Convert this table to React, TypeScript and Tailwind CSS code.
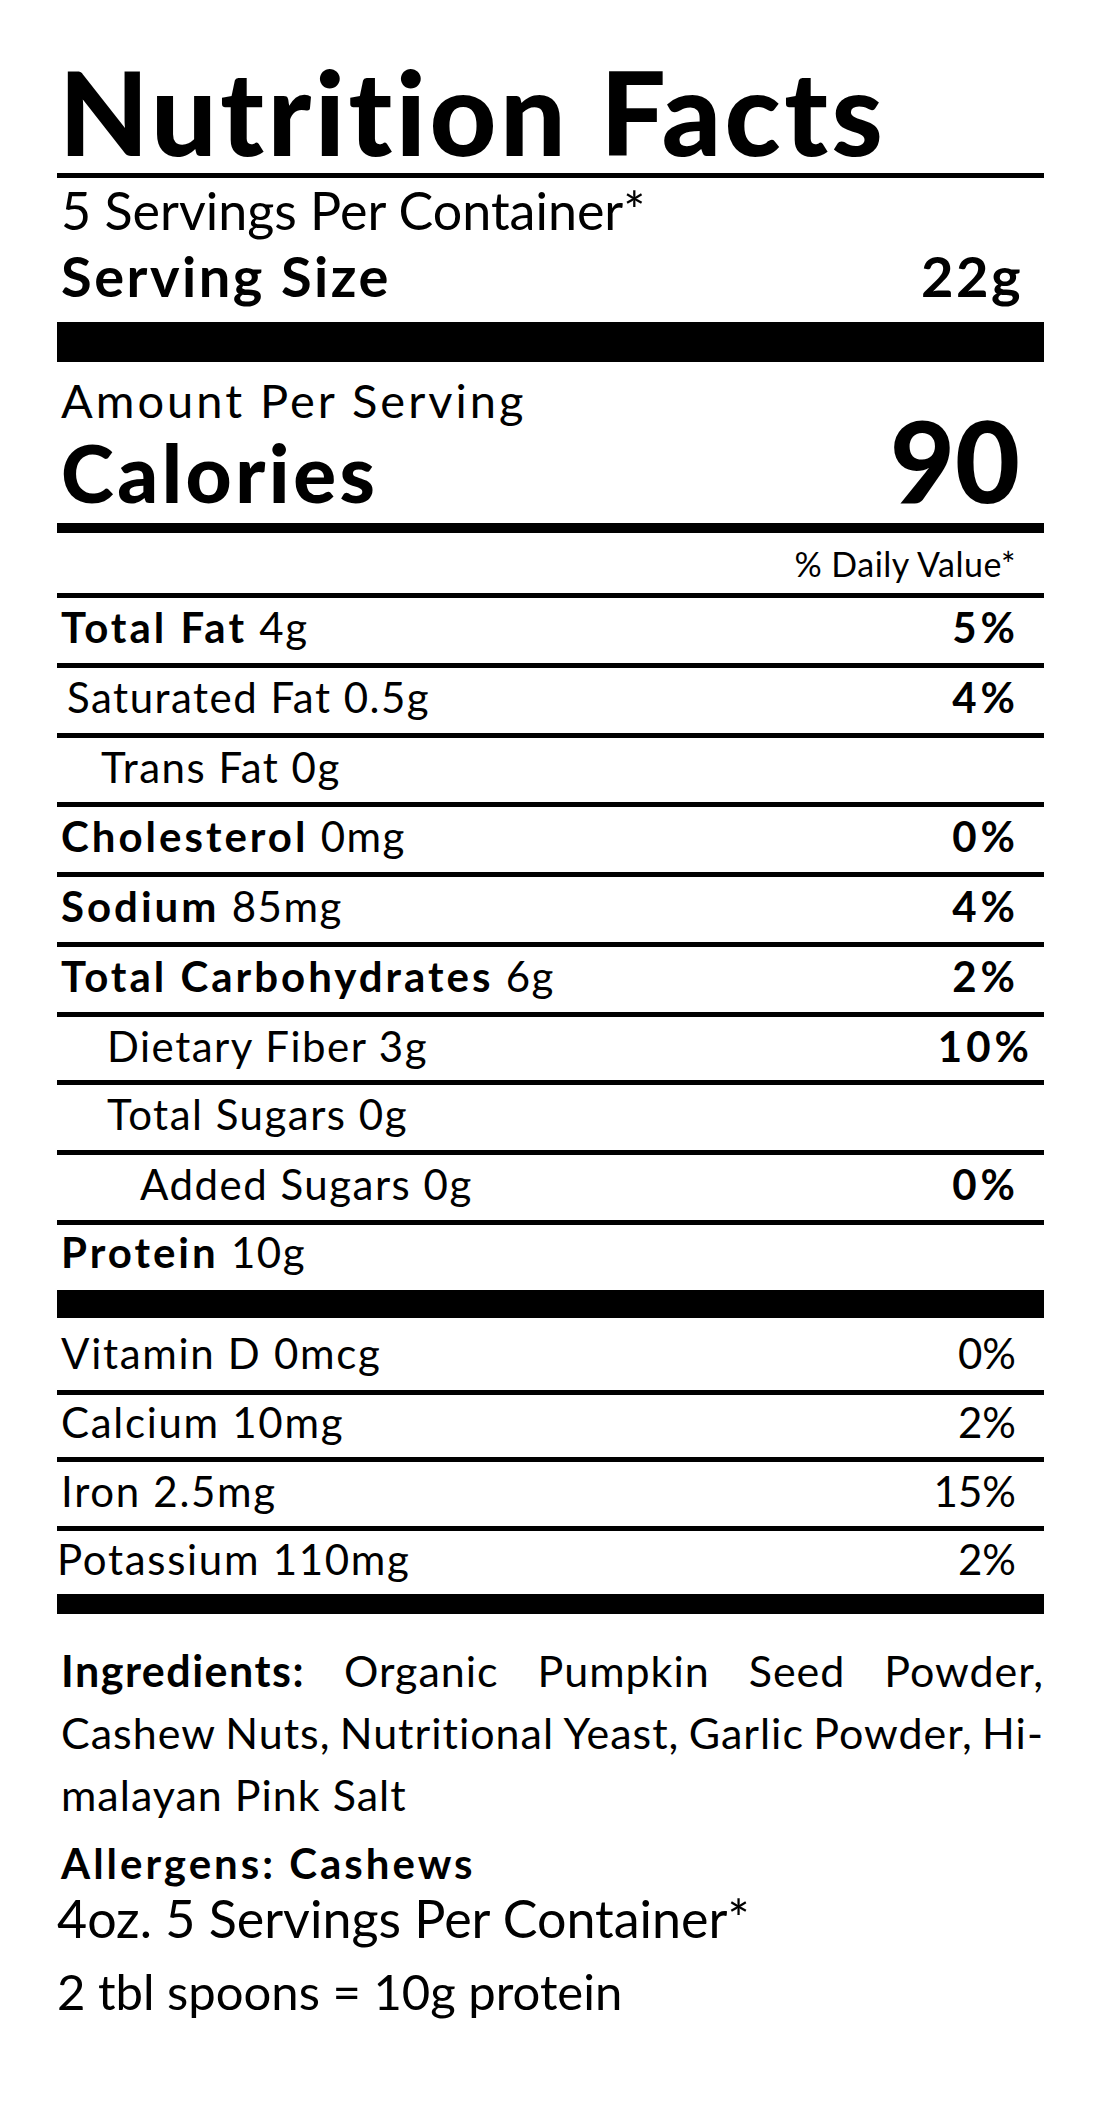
import React from 'react';

type Nutrient = {
  name: string;
  amount: string;
  dv?: string;
  bold?: boolean;
  indent: string;
  height: string;
  dvPad?: string;
};

const nutrients: Nutrient[] = [
  { name: 'Total Fat', amount: '4g', dv: '5%', bold: true, indent: 'pl-[4px]', height: 'h-[65px]' },
  { name: 'Saturated Fat', amount: '0.5g', dv: '4%', indent: 'pl-[10px]', height: 'h-[65px]' },
  { name: 'Trans Fat', amount: '0g', indent: 'pl-[44px]', height: 'h-[64px]' },
  { name: 'Cholesterol', amount: '0mg', dv: '0%', bold: true, indent: 'pl-[4px]', height: 'h-[65px]' },
  { name: 'Sodium', amount: '85mg', dv: '4%', bold: true, indent: 'pl-[4px]', height: 'h-[65px]' },
  { name: 'Total Carbohydrates', amount: '6g', dv: '2%', bold: true, indent: 'pl-[4px]', height: 'h-[65px]' },
  { name: 'Dietary Fiber', amount: '3g', dv: '10%', indent: 'pl-[50px]', height: 'h-[63px]', dvPad: 'pr-[11px]' },
  { name: 'Total Sugars', amount: '0g', indent: 'pl-[50px]', height: 'h-[65px]' },
  { name: 'Added Sugars', amount: '0g', dv: '0%', indent: 'pl-[83px]', height: 'h-[65px]' },
];

const vitamins = [
  { label: 'Vitamin D 0mcg', dv: '0%', height: 'h-[72px]', pad: 'pt-[14px] pl-[4px]' },
  { label: 'Calcium 10mg', dv: '2%', height: 'h-[62px]', pad: 'pt-[6px] pl-[4px]' },
  { label: 'Iron 2.5mg', dv: '15%', height: 'h-[64px]', pad: 'pt-[8px] pl-[4px]' },
  { label: 'Potassium 110mg', dv: '2%', height: 'h-[63px]', pad: 'pt-[7px] pl-[0px]' },
];

const ingredientLines = [
  ['Organic', 'Pumpkin', 'Seed', 'Powder,'],
  ['Cashew', 'Nuts,', 'Nutritional', 'Yeast,', 'Garlic', 'Powder,', 'Hi-'],
];

const Rule = ({ h }: { h: string }) => <div className={`${h} bg-black`} />;

export default function App() {
  return (
    <div className="min-h-[2127px] bg-white text-black font-['Lato',sans-serif] [font-variant-ligatures:none]">
      <div className="ml-[57px] w-[987px]">
        {/* header */}
        <div className="h-[173px] pt-[54px] pl-[2px]">
          <h1 className="text-[116px] leading-none font-black tracking-[3.5px]">Nutrition Facts</h1>
        </div>
        <Rule h="h-[5px]" />
        <div className="h-[144px] pt-[6px] pl-[4px]">
          <div className="text-[52px] leading-none">5 Servings Per Container*</div>
          <div className="mt-[12px] flex justify-between pr-[21px] text-[56px] leading-none font-bold tracking-[2.5px]">
            <span>Serving Size</span>
            <span>22g</span>
          </div>
        </div>
        <Rule h="h-[40px]" />

        {/* calories */}
        <div className="h-[161px] flex justify-between pl-[4px] pr-[24px]">
          <div className="pt-[15px]">
            <div className="text-[47px] leading-none tracking-[3px]">Amount Per Serving</div>
            <div className="mt-[8px] text-[80px] leading-none font-black tracking-[3.5px]">Calories</div>
          </div>
          <div className="pt-[42px] text-[112px] leading-none font-black">90</div>
        </div>
        <Rule h="h-[10px]" />
        <div className="h-[60px] pt-[14px] pr-[28px] text-right text-[34px] leading-none tracking-[0.5px]">% Daily Value*</div>
        <Rule h="h-[5px]" />

        {nutrients.map((n) => (
          <div key={n.name}>
            <div className={`${n.height} flex justify-between pt-[8px] text-[42px] leading-none`}>
              <div className={`${n.indent} tracking-[1.5px]`}>
                {n.bold ? <span className="font-bold tracking-[3px]">{n.name}</span> : n.name} {n.amount}
              </div>
              {n.dv && <div className={`font-bold tracking-[4px] ${n.dvPad ?? 'pr-[25px]'}`}>{n.dv}</div>}
            </div>
            <Rule h="h-[5px]" />
          </div>
        ))}
        <div className="h-[65px] pt-[6px] pl-[4px] text-[42px] leading-none tracking-[1.5px]">
          <span className="font-bold tracking-[3px]">Protein</span> 10g
        </div>
        <Rule h="h-[28px]" />

        {vitamins.map((v, i) => (
          <div key={v.label}>
            <div className={`${v.height} ${v.pad} flex justify-between pr-[28px] text-[42px] leading-none tracking-[1.7px]`}>
              <span>{v.label}</span>
              <span className="tracking-normal">{v.dv}</span>
            </div>
            {i < vitamins.length - 1 && <Rule h="h-[5px]" />}
          </div>
        ))}
        <Rule h="h-[20px]" />

        {/* ingredients */}
        <div className="mt-[26px] pl-[4px] text-[43px] leading-[62px] tracking-[1px]">
          <div className="flex justify-between">
            <span className="font-bold tracking-[1.5px]">Ingredients:</span>
            {ingredientLines[0].map((w) => (
              <span key={w}>{w}</span>
            ))}
          </div>
          <div className="flex justify-between">
            {ingredientLines[1].map((w) => (
              <span key={w}>{w}</span>
            ))}
          </div>
          <div>malayan Pink Salt</div>
        </div>
        <div className="mt-[16px] pl-[4px] text-[42px] leading-none font-bold tracking-[3px]">Allergens: Cashews</div>
        <div className="mt-[8px] pl-[0px] text-[52px] leading-none">4oz. 5 Servings Per Container*</div>
        <div className="mt-[23px] pl-[0px] text-[49px] leading-none">2 tbl spoons = 10g protein</div>
      </div>
    </div>
  );
}
